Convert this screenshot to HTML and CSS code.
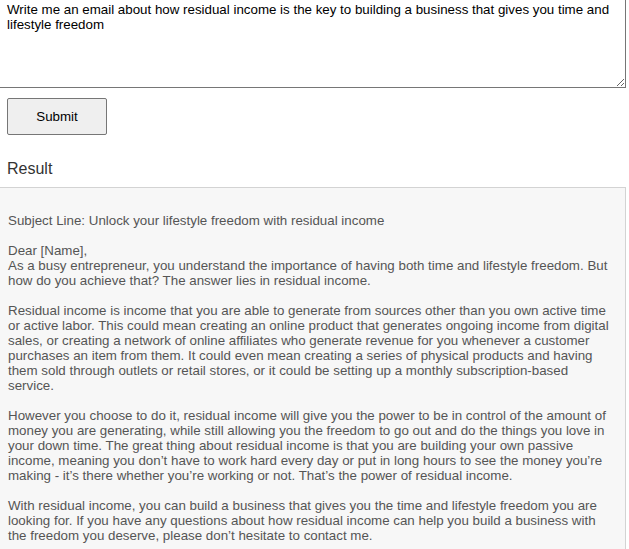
FILE: index.html
```html
<!DOCTYPE html>
<html>
<head>
<meta charset="utf-8">
<link rel="stylesheet" href="styles.css">
</head>
<body>
<div class="page">
  <textarea class="prompt">Write me an email about how residual income is the key to building a business that gives you time and lifestyle freedom</textarea>
  <button class="submit" type="button">Submit</button>
  <h2 class="result-title">Result</h2>
  <div class="result">Subject Line: Unlock your lifestyle freedom with residual income

Dear [Name],
As a busy entrepreneur, you understand the importance of having both time and lifestyle freedom. But how do you achieve that? The answer lies in residual income.

Residual income is income that you are able to generate from sources other than you own active time or active labor. This could mean creating an online product that generates ongoing income from digital sales, or creating a network of online affiliates who generate revenue for you whenever a customer purchases an item from them. It could even mean creating a series of physical products and having them sold through outlets or retail stores, or it could be setting up a monthly subscription-based service.

However you choose to do it, residual income will give you the power to be in control of the amount of money you are generating, while still allowing you the freedom to go out and do the things you love in your down time. The great thing about residual income is that you are building your own passive income, meaning you don’t have to work hard every day or put in long hours to see the money you’re making - it’s there whether you’re working or not. That’s the power of residual income.

With residual income, you can build a business that gives you the time and lifestyle freedom you are looking for. If you have any questions about how residual income can help you build a business with the freedom you deserve, please don’t hesitate to contact me.</div>
</div>
</body>
</html>
```

FILE: styles.css
```css
html, body {
  margin: 0;
  padding: 0;
  background: #ffffff;
  overflow: hidden;
}

.page {
  display: flex;
  flex-direction: column;
  align-items: flex-start;
  width: 627px;
  margin: -1px 0 0 -1px;
  font-family: "Liberation Sans", Arial, sans-serif;
}

.prompt {
  box-sizing: border-box;
  display: block;
  width: 627px;
  height: 89px;
  margin: 0;
  padding: 2px 7px;
  border: 1px solid #767676;
  font-family: "Liberation Sans", Arial, sans-serif;
  font-size: 13.33px;
  line-height: 15px;
  color: #000;
  resize: vertical;
}

.submit {
  box-sizing: border-box;
  width: 100px;
  height: 37px;
  margin: 10px 0 0 8px;
  padding: 0;
  border: 1px solid #767676;
  border-radius: 2px;
  background: #efefef;
  color: #000;
  font-family: "Liberation Sans", Arial, sans-serif;
  font-size: 13.33px;
}

.result-title {
  margin: 25px 0 0 8px;
  font-size: 16px;
  font-weight: normal;
  line-height: 18px;
  color: #333;
}

.result {
  box-sizing: border-box;
  width: 627px;
  margin-top: 9px;
  padding: 25px 8px 20px 8px;
  border: 1px solid #d3d3d3;
  background: #f7f7f7;
  white-space: pre-wrap;
  font-size: 13.33px;
  line-height: 15px;
  color: #555;
}
```
